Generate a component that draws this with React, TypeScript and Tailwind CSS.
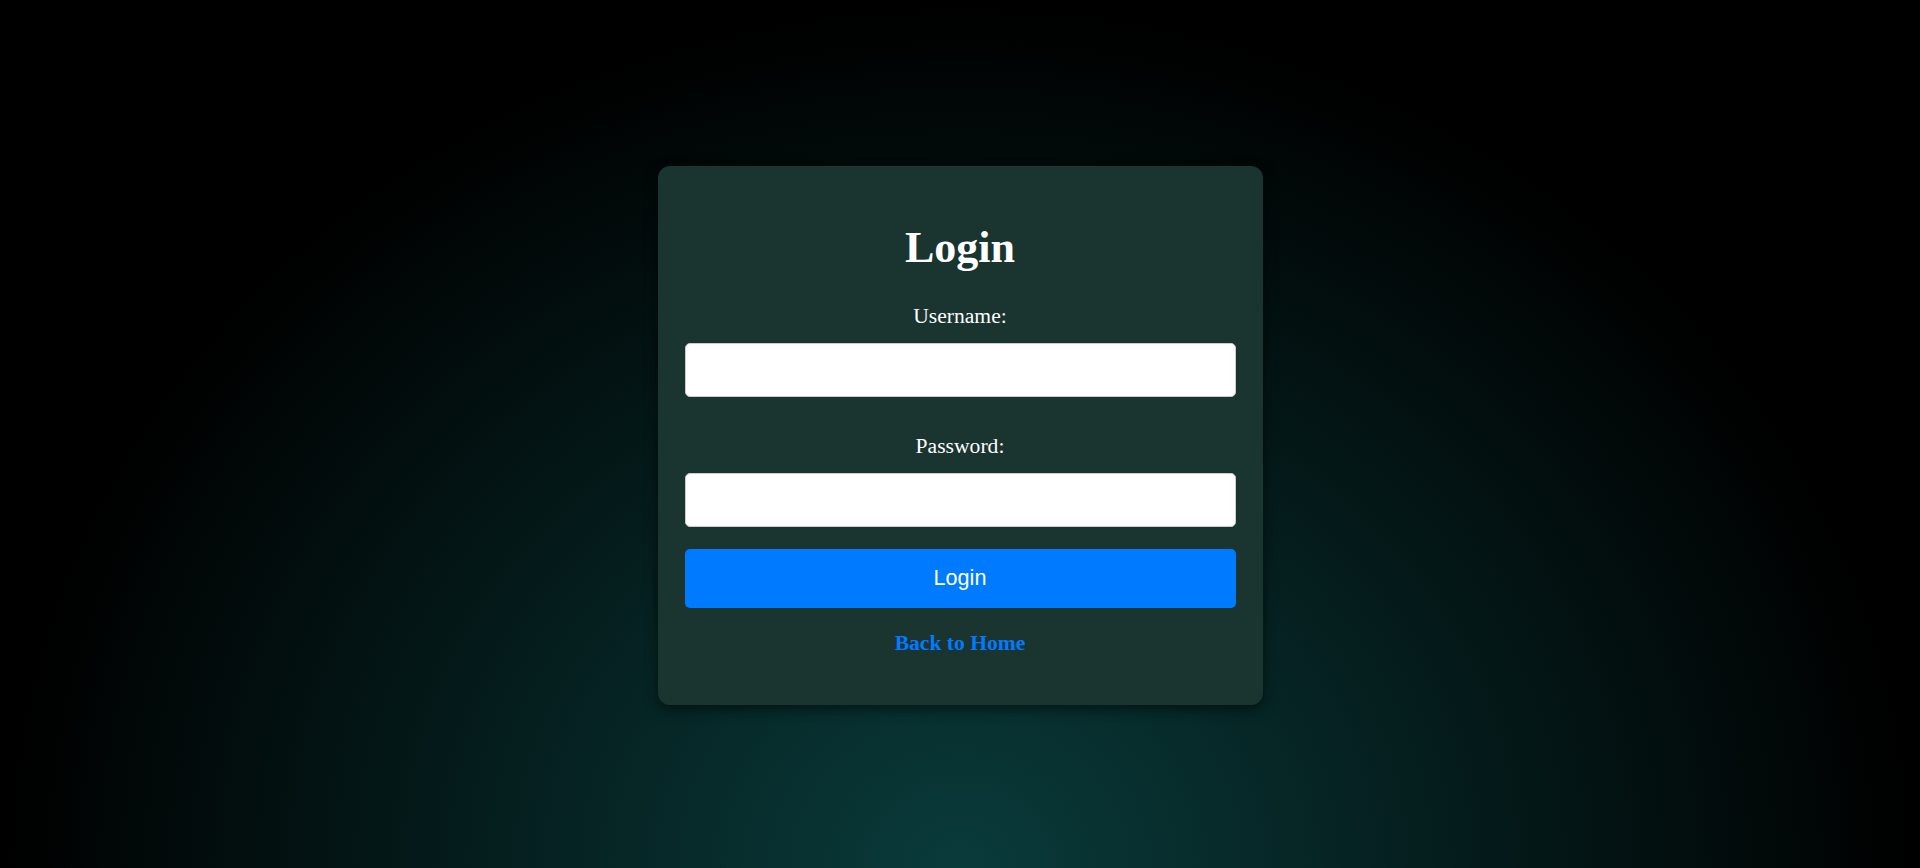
import React from "react";

export default function App() {
  return (
    <div
      className="min-h-screen w-full flex items-center justify-center bg-[radial-gradient(ellipse_at_bottom,#0a3b3b_0%,#000_70%)]"
      style={{ fontFamily: '"Liberation Serif", "Times New Roman", serif' }}
    >
      <div className="mt-[3px] w-[605px] rounded-[12px] bg-[#1a3430] px-[27px] pt-[58px] pb-[50px] shadow-[0_4px_14px_rgba(0,0,0,0.55)] flex flex-col items-stretch">
        <h1 className="h-[48px] leading-[48px] text-center text-[44px] font-bold text-white">
          Login
        </h1>
        <label className="mt-[32px] h-[24px] leading-[24px] text-center text-[21.6px] text-white">
          Username:
        </label>
        <input
          type="text"
          className="mt-[15px] h-[54px] w-full rounded-[5px] border border-[#cccccc] bg-white px-3 outline-none"
        />
        <label className="mt-[37px] h-[24px] leading-[24px] text-center text-[21.6px] text-white">
          Password:
        </label>
        <input
          type="password"
          className="mt-[15px] h-[54px] w-full rounded-[5px] border border-[#cccccc] bg-white px-3 outline-none"
        />
        <button
          className="mt-[22px] h-[59px] w-full rounded-[5px] bg-[#007bff] text-[21.6px] text-white"
          style={{ fontFamily: '"Liberation Sans", Arial, sans-serif' }}
        >
          Login
        </button>
        <a
          href="#"
          className="mt-[23px] h-[24px] leading-[24px] text-center text-[21.6px] font-bold text-[#007bff] no-underline"
        >
          Back to Home
        </a>
      </div>
    </div>
  );
}
